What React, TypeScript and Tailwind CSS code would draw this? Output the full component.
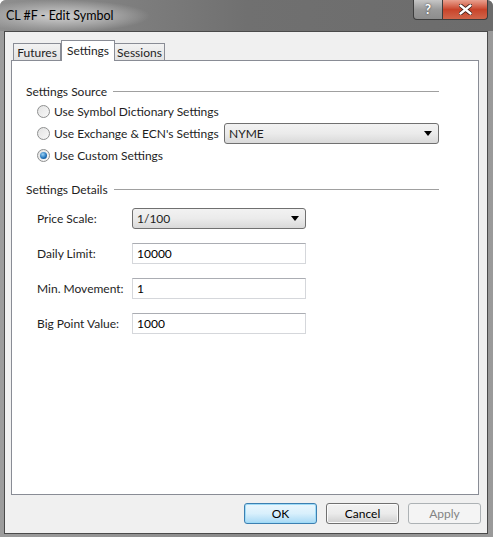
import React from "react";

const font = { fontFamily: 'Lato, "Liberation Sans", sans-serif' };

function Radio({ checked }: { checked?: boolean }) {
  return (
    <span className="relative grid h-[13px] w-[13px] shrink-0 place-items-center rounded-full border border-[#8e8f8f] bg-gradient-to-br from-[#e3e3e3] to-[#f8f8f8]">
      {checked && (
        <span className="h-[7px] w-[7px] rounded-full bg-[radial-gradient(circle_at_40%_35%,#9bd2f5,#1d6fb8_60%,#0c3f78)]" />
      )}
    </span>
  );
}

function Combo({ value, className }: { value: string; className: string }) {
  return (
    <div
      className={`flex h-[21px] items-center justify-between rounded-[3px] border border-[#707070] bg-gradient-to-b from-[#f2f2f2] via-[#ebebeb] to-[#d9d9d9] pl-[4px] pr-[6px] text-[12px] text-[#1e1e1e] ${className}`}
    >
      <span>{value}</span>
      <svg width="8" height="5" viewBox="0 0 8 5">
        <path d="M0 0h8L4 5z" fill="#000" />
      </svg>
    </div>
  );
}

function Field({ label, children }: { label: string; children: React.ReactNode }) {
  return (
    <div className="flex items-center">
      <span className="w-[95px] text-[12px] text-[#1e1e1e]">{label}</span>
      {children}
    </div>
  );
}

function TextBox({ value }: { value: string }) {
  return (
    <div className="flex h-[21px] w-[174px] items-center border border-[#d5d7db] border-t-[#abadb3] bg-white pl-[4px] text-[12px] text-black">
      {value}
    </div>
  );
}

function Group({ title }: { title: string }) {
  return (
    <div className="flex h-[15px] items-center gap-[6px] pr-[39px] text-[12px] text-[#1e1e1e]">
      <span>{title}</span>
      <span className="h-px flex-1 bg-[#a0a0a0]" />
    </div>
  );
}

export default function App() {
  return (
    <div
      className="flex h-[537px] w-[493px] flex-col overflow-hidden rounded-t-[6px] bg-gradient-to-r from-[#9c9c9c] via-[#8a8a8a] to-[#9a9a9a] leading-[15px]"
      style={font}
    >
      {/* title bar */}
      <div className="flex h-[31px] shrink-0 items-start justify-between bg-[radial-gradient(ellipse_90px_16px_at_60px_16px,#cfcfcf,#a8a8a8_55%,transparent_100%),linear-gradient(to_right,#8e8e8e,#707070_50%,#6c6c6c)]">
        <span className="mt-[8px] ml-[6px] text-[12.5px] text-black">CL #F - Edit Symbol</span>
        <div className="mr-[5px] flex">
          <div className="grid h-[20px] w-[30px] place-items-center rounded-bl-[4px] border border-t-0 border-[#3d3d3d] bg-gradient-to-b from-[#c6c6c6] via-[#9a9a9a] to-[#8d8d8d] text-[13px] font-bold text-white [text-shadow:0_0_2px_#333]">
            ?
          </div>
          <div className="grid h-[20px] w-[45px] place-items-center rounded-br-[4px] border border-l-0 border-t-0 border-[#3d3d3d] bg-gradient-to-b from-[#e8a08f] via-[#c8432a] to-[#d0654a]">
            <svg width="13" height="11" viewBox="0 0 13 11">
              <path d="M1 1l11 9M12 1L1 10" stroke="#3a1a14" strokeWidth="4" strokeLinecap="round" />
              <path d="M1.5 1.5l10 8M11.5 1.5l-10 8" stroke="#fff" strokeWidth="2.4" strokeLinecap="round" />
            </svg>
          </div>
        </div>
      </div>

      {/* client area */}
      <div className="mb-[3px] ml-[4px] mr-[5px] flex flex-1 flex-col border border-[#4a4a4a] bg-[#f0f0f0] pt-[8px]">
        <div className="flex pl-[8px] text-[12px] text-[#1e1e1e]">
          <div className="mt-[3px] flex h-[17px] w-[48px] items-center justify-center border border-b-0 border-[#898c95] bg-gradient-to-b from-[#f2f2f2] to-[#e3e3e3]">
            Futures
          </div>
          <div className="relative z-10 -mb-px flex h-[21px] w-[54px] items-start justify-center border border-b-0 border-[#898c95] bg-white pt-[2px]">
            Settings
          </div>
          <div className="mt-[3px] flex h-[17px] w-[50px] items-center justify-center border border-b-0 border-l-0 border-[#898c95] bg-gradient-to-b from-[#f2f2f2] to-[#e3e3e3]">
            Sessions
          </div>
        </div>
        <div className="ml-[6px] mr-[8px] h-[435px] border border-[#898c95] bg-white pl-[14px] pt-[23px]">
          <Group title="Settings Source" />
          <div className="mt-[4px] flex flex-col gap-[5px] pl-[11px] text-[12px] text-[#1e1e1e]">
            <div className="flex h-[17px] items-center gap-[4px]">
              <Radio />
              <span>Use Symbol Dictionary Settings</span>
            </div>
            <div className="flex h-[17px] items-center gap-[4px]">
              <Radio />
              <span className="w-[166px] whitespace-nowrap">Use Exchange &amp; ECN's Settings</span>
              <Combo value="NYME" className="w-[215px]" />
            </div>
            <div className="flex h-[17px] items-center gap-[4px]">
              <Radio checked />
              <span>Use Custom Settings</span>
            </div>
          </div>

          <div className="mt-[18px]">
            <Group title="Settings Details" />
          </div>
          <div className="mt-[11px] flex flex-col gap-[14px] pl-[11px]">
            <Field label="Price Scale:">
              <Combo value="1/100" className="w-[174px]" />
            </Field>
            <Field label="Daily Limit:">
              <TextBox value="10000" />
            </Field>
            <Field label="Min. Movement:">
              <TextBox value="1" />
            </Field>
            <Field label="Big Point Value:">
              <TextBox value="1000" />
            </Field>
          </div>
        </div>

        <div className="mt-[8px] flex justify-end gap-[9px] pr-[6px] text-[12px]">
          <button className="h-[21px] w-[73px] rounded-[3px] border border-[#3c7fb1] bg-gradient-to-b from-[#eaf6fd] via-[#d9f0fc] to-[#a7d9f5] text-black shadow-[inset_0_0_0_1px_#9fdbf7]">
            OK
          </button>
          <button className="h-[21px] w-[73px] rounded-[3px] border border-[#707070] bg-gradient-to-b from-[#f2f2f2] via-[#ebebeb] to-[#cfcfcf] text-black shadow-[inset_0_0_0_1px_#fbfbfb]">
            Cancel
          </button>
          <button className="h-[21px] w-[73px] rounded-[3px] border border-[#adb2b5] bg-[#f4f4f4] text-[#838383]">
            Apply
          </button>
        </div>
      </div>
    </div>
  );
}
